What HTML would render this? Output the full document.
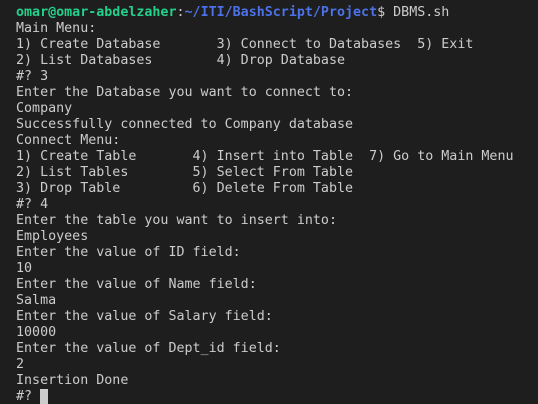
<!DOCTYPE html>
<html><head><style>
html,body{margin:0;padding:0;background:#1e1e1e;width:538px;height:404px;overflow:hidden}
pre{margin:0;padding:5px 0 0 16px;font-family:"DejaVu Sans Mono","Liberation Mono",monospace;font-size:13.33px;line-height:16px;color:#cccccc}
.g{color:#23d18b;font-weight:bold}.b{color:#4b72e8;font-weight:bold}
.c{display:inline-block;width:8px;height:16px;background:#cccccc;vertical-align:top}
</style></head><body><pre><span class="g">omar@omar-abdelzaher</span>:<span class="b">~/ITI/BashScript/Project</span>$ DBMS.sh
Main Menu:
1) Create Database       3) Connect to Databases  5) Exit
2) List Databases        4) Drop Database
#? 3
Enter the Database you want to connect to:
Company
Successfully connected to Company database
Connect Menu:
1) Create Table       4) Insert into Table  7) Go to Main Menu
2) List Tables        5) Select From Table
3) Drop Table         6) Delete From Table
#? 4
Enter the table you want to insert into:
Employees
Enter the value of ID field:
10
Enter the value of Name field:
Salma
Enter the value of Salary field:
10000
Enter the value of Dept_id field:
2
Insertion Done
#? <span class="c"></span></pre></body></html>
